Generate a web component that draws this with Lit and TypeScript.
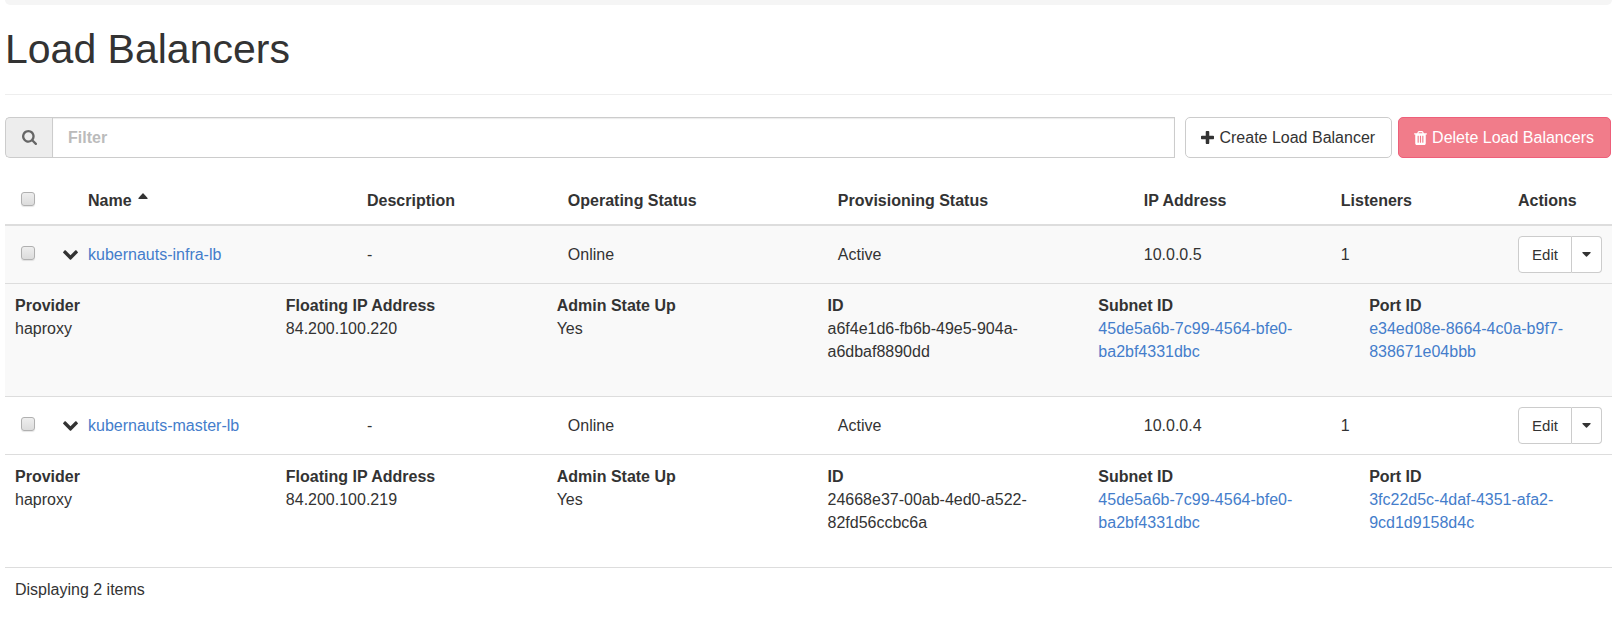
import { LitElement, html, css, svg } from "lit";
import { customElement, property, state } from "lit/decorators.js";

interface Detail {
  label: string;
  value: string;
  link?: boolean;
}

interface Balancer {
  name: string;
  description: string;
  operating: string;
  provisioning: string;
  ip: string;
  listeners: number;
  details: Detail[];
}

const BALANCERS: Balancer[] = [
  {
    name: "kubernauts-infra-lb",
    description: "-",
    operating: "Online",
    provisioning: "Active",
    ip: "10.0.0.5",
    listeners: 1,
    details: [
      { label: "Provider", value: "haproxy" },
      { label: "Floating IP Address", value: "84.200.100.220" },
      { label: "Admin State Up", value: "Yes" },
      { label: "ID", value: "a6f4e1d6-fb6b-49e5-904a-a6dbaf8890dd" },
      { label: "Subnet ID", value: "45de5a6b-7c99-4564-bfe0-ba2bf4331dbc", link: true },
      { label: "Port ID", value: "e34ed08e-8664-4c0a-b9f7-838671e04bbb", link: true },
    ],
  },
  {
    name: "kubernauts-master-lb",
    description: "-",
    operating: "Online",
    provisioning: "Active",
    ip: "10.0.0.4",
    listeners: 1,
    details: [
      { label: "Provider", value: "haproxy" },
      { label: "Floating IP Address", value: "84.200.100.219" },
      { label: "Admin State Up", value: "Yes" },
      { label: "ID", value: "24668e37-00ab-4ed0-a522-82fd56ccbc6a" },
      { label: "Subnet ID", value: "45de5a6b-7c99-4564-bfe0-ba2bf4331dbc", link: true },
      { label: "Port ID", value: "3fc22d5c-4daf-4351-afa2-9cd1d9158d4c", link: true },
    ],
  },
];

const ICONS: Record<string, { box: string; d: string }> = {
  search: {
    box: "64 128 1664 1664",
    d: "M1216 832q0-185-131.500-316.500t-316.500-131.500-316.500 131.500-131.500 316.500 131.500 316.500 316.500 131.500 316.500-131.500 131.500-316.500zm512 832q0 52-38 90t-90 38q-54 0-90-38l-343-342q-179 124-399 124-143 0-273.500-55.500t-225-150-150-225-55.500-273.500 55.500-273.500 150-225 225-150 273.500-55.500 273.500 55.500 225 150 150 225 55.500 273.500q0 220-124 399l343 343q37 37 37 90z",
  },
  plus: {
    box: "192 128 1408 1408",
    d: "M1600 736v192q0 40-28 68t-68 28h-416v416q0 40-28 68t-68 28h-192q-40 0-68-28t-28-68v-416h-416q-40 0-68-28t-28-68v-192q0-40 28-68t68-28h416v-416q0-40 28-68t68-28h192q40 0 68 28t28 68v416h416q40 0 68 28t28 68z",
  },
  trash: {
    box: "192 128 1408 1536",
    d: "M704 1376v-704q0-14-9-23t-23-9h-64q-14 0-23 9t-9 23v704q0 14 9 23t23 9h64q14 0 23-9t9-23zm256 0v-704q0-14-9-23t-23-9h-64q-14 0-23 9t-9 23v704q0 14 9 23t23 9h64q14 0 23-9t9-23zm256 0v-704q0-14-9-23t-23-9h-64q-14 0-23 9t-9 23v704q0 14 9 23t23 9h64q14 0 23-9t9-23zm-544-992h448l-48-117q-7-9-17-11h-317q-10 2-17 11zm928 32v64q0 14-9 23t-23 9h-96v948q0 83-47 143.500t-113 60.500h-832q-66 0-113-58.500t-47-141.500v-952h-96q-14 0-23-9t-9-23v-64q0-14 9-23t23-9h309l70-167q15-37 54-63t79-26h320q40 0 79 26t54 63l70 167h309q14 0 23 9t9 23z",
  },
  chevron: {
    box: "90 533 1612 1035",
    d: "M1683 808l-742 741q-19 19-45 19t-45-19l-742-741q-19-19-19-45.500t19-45.500l166-165q19-19 45-19t45 19l531 531 531-531q19-19 45-19t45 19l166 165q19 19 19 45.500t-19 45.500z",
  },
  up: { box: "0 0 20 12", d: "M1.500 12h17q1.500-.8.500-2L11 1q-1-1-2 0L1 10q-1 1.200.5 2z" },
  down: { box: "0 0 18 10", d: "M1.500 0h15q1.500.8.500 2L10 9q-1 1-2 0L1 2Q0 .8 1.500 0z" },
};

function icon(name: string) {
  const { box, d } = ICONS[name];
  return html`<svg class="icon ${name}" viewBox=${box} aria-hidden="true">${svg`<path d=${d} />`}</svg>`;
}

const base = css`
  * {
    box-sizing: border-box;
  }
  .icon {
    display: block;
    flex: none;
    fill: currentColor;
  }
  button {
    font: inherit;
    color: inherit;
    margin: 0;
    cursor: pointer;
  }
`;

@customElement("lb-toolbar")
export class LbToolbar extends LitElement {
  @property({ type: Boolean }) canDelete = false;

  static styles = [
    base,
    css`
      :host {
        display: flex;
        padding-right: 1px;
      }
      .group {
        display: flex;
        flex: 1;
        min-width: 0;
        margin-right: 10px;
      }
      .addon {
        display: flex;
        align-items: center;
        justify-content: center;
        width: 47px;
        color: #666;
        background: #ededed;
        border: 1px solid #ccc;
        border-right: 0;
        border-radius: 5px 0 0 5px;
      }
      .search {
        width: 15px;
        height: 15px;
      }
      .filter {
        flex: 1;
        min-width: 0;
        height: 41px;
        margin: 0;
        padding: 0 15px;
        font: inherit;
        color: #333;
        background: #fff;
        border: 1px solid #ccc;
        border-radius: 0;
        box-shadow: inset 0 1px 1px rgba(0, 0, 0, 0.08);
        outline: 0;
      }
      .filter::placeholder {
        color: #bbb;
        font-weight: bold;
        opacity: 1;
      }
      .actions {
        display: flex;
        gap: 6px;
      }
      .btn {
        display: flex;
        align-items: center;
        gap: 5px;
        height: 41px;
        padding: 0 16px 0 15px;
        white-space: nowrap;
        background: #fff;
        border: 1px solid #ccc;
        border-radius: 5px;
      }
      .danger {
        color: #fff;
        background: #f17c8a;
        border-color: #ee5f7a;
      }
      .danger:disabled {
        cursor: not-allowed;
      }
      .plus {
        width: 13px;
        height: 13px;
      }
      .trash {
        width: 13px;
        height: 14px;
      }
    `,
  ];

  render() {
    return html`
      <div class="group">
        <label class="addon" for="filter" aria-label="Filter">${icon("search")}</label>
        <input class="filter" id="filter" type="text" placeholder="Filter" />
      </div>
      <div class="actions">
        <button class="btn" type="button">${icon("plus")}<span>Create Load Balancer</span></button>
        <button class="btn danger" type="button" ?disabled=${!this.canDelete}>
          ${icon("trash")}<span>Delete Load Balancers</span>
        </button>
      </div>
    `;
  }
}

@customElement("lb-table")
export class LbTable extends LitElement {
  @property({ attribute: false }) rows: Balancer[] = [];
  @state() private closed = new Set<string>();

  static styles = [
    base,
    css`
      :host {
        display: block;
      }
      table {
        width: 100%;
        table-layout: fixed;
        border-collapse: separate;
        border-spacing: 0;
      }
      th,
      td {
        padding: 10px;
        text-align: left;
        vertical-align: middle;
      }
      th {
        padding: 12px 10px;
        border-bottom: 2px solid #ddd;
      }
      td {
        border-bottom: 1px solid #ddd;
      }
      tfoot td {
        border-bottom: 0;
      }
      .check {
        width: 48px;
        padding-left: 16px;
      }
      .toggle {
        width: 25px;
        padding-right: 0;
      }
      .name {
        width: 17.36%;
      }
      .description {
        width: 12.5%;
      }
      .operating {
        width: 16.8%;
      }
      .provisioning {
        width: 19.04%;
      }
      .ip {
        width: 12.26%;
      }
      .act {
        width: 104px;
      }
      .striped td {
        background: #f9f9f9;
      }
      input {
        display: block;
        appearance: none;
        width: 14px;
        height: 14px;
        margin: 0 0 3px;
        background: linear-gradient(#eee, #dcdcdc);
        border: 1px solid #b0b0b0;
        border-radius: 3px;
        box-shadow: 0 1px 1px rgba(0, 0, 0, 0.1);
      }
      input:checked {
        background: #4a7fcb;
      }
      .sort {
        display: flex;
        gap: 6px;
        padding: 0;
        font-weight: bold;
        background: none;
        border: 0;
      }
      .up {
        width: 10px;
        height: 6px;
        margin-top: 4px;
      }
      .expand {
        display: block;
        padding: 0;
        background: none;
        border: 0;
      }
      .chevron {
        width: 15px;
        height: 10px;
      }
      a {
        color: #447dcb;
        text-decoration: none;
      }
      .split {
        display: flex;
        height: 37px;
        font-size: 15px;
      }
      .split button {
        display: flex;
        align-items: center;
        justify-content: center;
        background: #fff;
        border: 1px solid #ccc;
      }
      .split .edit {
        flex: 1;
        padding: 0;
        border-radius: 4px 0 0 4px;
      }
      .split .menu {
        width: 30px;
        padding: 0;
        border-left: 0;
        border-radius: 0 4px 4px 0;
      }
      .down {
        width: 9px;
        height: 5px;
      }
      dl {
        display: grid;
        grid-template-columns: repeat(6, minmax(0, 1fr));
        column-gap: 38px;
        margin: 0 0 23px;
      }
      dt {
        font-weight: bold;
      }
      dd {
        margin: 0;
      }
    `,
  ];

  private flip(name: string) {
    const next = new Set(this.closed);
    if (!next.delete(name)) next.add(name);
    this.closed = next;
  }

  private renderRow(row: Balancer, index: number) {
    const stripe = index % 2 === 0 ? "striped" : "";
    const open = !this.closed.has(row.name);
    return html`
      <tr class=${stripe}>
        <td class="check"><input type="checkbox" aria-label="Select ${row.name}" /></td>
        <td class="toggle">
          <button
            class="expand"
            type="button"
            aria-label="Details of ${row.name}"
            aria-expanded=${open ? "true" : "false"}
            @click=${() => this.flip(row.name)}
          >
            ${icon("chevron")}
          </button>
        </td>
        <td><a href="#${row.name}">${row.name}</a></td>
        <td>${row.description}</td>
        <td>${row.operating}</td>
        <td>${row.provisioning}</td>
        <td>${row.ip}</td>
        <td>${row.listeners}</td>
        <td>
          <div class="split">
            <button class="edit" type="button">Edit</button>
            <button class="menu" type="button" aria-label="More actions">${icon("down")}</button>
          </div>
        </td>
      </tr>
      ${open
        ? html`<tr class=${stripe}>
            <td colspan="9">
              <dl>
                ${row.details.map(
                  (item) => html`<div>
                    <dt>${item.label}</dt>
                    <dd>${item.link ? html`<a href="#${item.value}">${item.value}</a>` : item.value}</dd>
                  </div>`,
                )}
              </dl>
            </td>
          </tr>`
        : ""}
    `;
  }

  render() {
    return html`
      <table>
        <thead>
          <tr>
            <th class="check"><input type="checkbox" aria-label="Select all" /></th>
            <th class="toggle"></th>
            <th class="name"><button class="sort" type="button">Name ${icon("up")}</button></th>
            <th class="description">Description</th>
            <th class="operating">Operating Status</th>
            <th class="provisioning">Provisioning Status</th>
            <th class="ip">IP Address</th>
            <th>Listeners</th>
            <th class="act">Actions</th>
          </tr>
        </thead>
        <tbody>
          ${this.rows.map((row, index) => this.renderRow(row, index))}
        </tbody>
        <tfoot>
          <tr>
            <td colspan="9">Displaying ${this.rows.length} items</td>
          </tr>
        </tfoot>
      </table>
    `;
  }
}

@customElement("app-root")
export class AppRoot extends LitElement {
  static styles = css`
    :host {
      display: block;
      padding: 0 11px 0 5px;
      color: #333;
      background: #fff;
      font: 16px/23px "Liberation Sans", Arial, sans-serif;
    }
    .crumbs {
      height: 5px;
      background: #f5f5f5;
      border-radius: 0 0 5px 5px;
    }
    h1 {
      margin: 0 0 22px;
      padding: 21px 0 22px;
      font-size: 41px;
      line-height: 46px;
      font-weight: normal;
      border-bottom: 1px solid #eee;
    }
    lb-toolbar {
      margin-bottom: 19px;
    }
  `;

  render() {
    return html`
      <div class="crumbs"></div>
      <h1>Load Balancers</h1>
      <lb-toolbar></lb-toolbar>
      <lb-table .rows=${BALANCERS}></lb-table>
    `;
  }
}
